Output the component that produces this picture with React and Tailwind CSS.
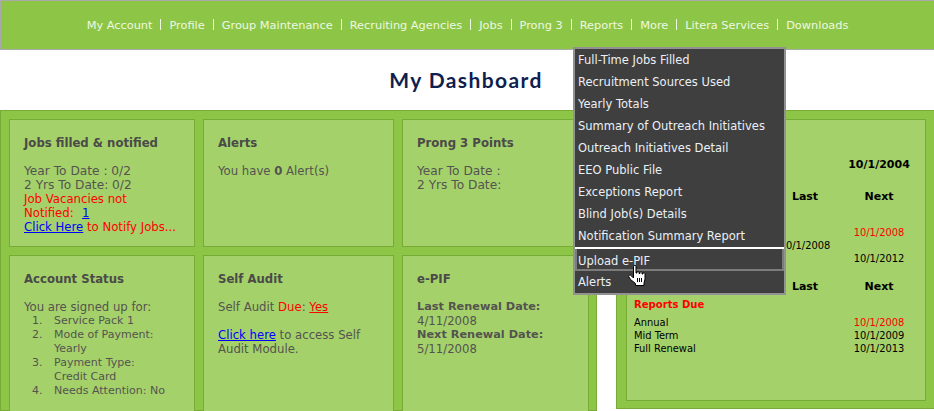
const nav = ["My Account","Profile","Group Maintenance","Recruiting Agencies","Jobs","Prong 3","Reports","More","Litera Services","Downloads"];
const menuTop = ["Full-Time Jobs Filled","Recruitment Sources Used","Yearly Totals","Summary of Outreach Initiatives","Outreach Initiatives Detail","EEO Public File","Exceptions Report","Blind Job(s) Details","Notification Summary Report"];

function Card({ title, className, children }) {
  return (
    <section className={`border border-[#78ab36] bg-[#a5d16b] pl-[14px] pr-2 pt-4 text-[11.7px] leading-[14px] text-[#54544f] ${className}`}>
      <h2 className="mb-[14px] text-[11.7px] font-bold leading-[14px] text-[#4a4a48]">{title}</h2>
      {children}
    </section>
  );
}

function Hand() {
  return (
    <svg className="absolute left-[628px] top-[264px]" width="18" height="23" viewBox="0 0 18 23">
      <path d="M5.5 2.5 C5.5 1 8 1 8 2.5 V9 H9 V8 C9 7 11 7 11 8 V9.5 H12 V8.5 C12 7.5 14 7.5 14 8.5 V10 H15 V9.5 C15 8.5 17 8.5 17 9.5 V15 L16 19 V21.5 H7.5 V19.5 L2.5 15.5 L.7 12.5 C.5 11 2.5 10.5 3.5 12 L5.5 14 Z" fill="#fff" stroke="#000" strokeWidth="1" />
      <path d="M9.5 14v4M11.5 14v4M13.5 14v4" stroke="#000" strokeWidth="1" fill="none" />
    </svg>
  );
}

export default function App() {
  return (
    <div className="relative h-[411px] w-[934px] overflow-hidden bg-white font-['DejaVu_Sans',sans-serif]">
      <nav className="flex h-[50px] items-center justify-center border border-r-0 border-[#aaaaaa] bg-[#8dc646] text-[11.33px] text-[#eef8e0]">
        {nav.map((n, i) => (
          <div key={n} className="flex items-center">
            {i > 0 && <span className="mx-[8px] h-[11px] w-px bg-[#eef8e0]" />}
            <span>{n}</span>
          </div>
        ))}
      </nav>

      <h1 className="flex h-[60px] items-center justify-center pr-[2px] font-['Lato',sans-serif] text-[21px] font-bold tracking-[1.4px] text-[#0f1f4f]">My Dashboard</h1>

      <main className="flex items-start">
        <div className="grid h-[301px] w-[597px] grid-cols-[186px_191px_187px] grid-rows-[128px_150px] gap-x-2 gap-y-2 border border-[#78ab36] bg-[#8dc646] pl-2 pt-2">
          <Card title="Jobs filled & notified">
            <p className="text-[12.2px]">Year To Date : 0/2</p>
            <p className="text-[12.2px]">2 Yrs To Date: 0/2</p>
            <p className="text-[#ff0000]">Job Vacancies not</p>
            <p className="text-[#ff0000]">Notified:&nbsp; <a className="ml-px text-[#0000ff] underline">1</a></p>
            <p className="text-[#ff0000]"><a className="text-[#0000ff] underline">Click Here</a> to Notify Jobs...</p>
          </Card>
          <Card title="Alerts">
            <p>You have <b>0</b> Alert(s)</p>
          </Card>
          <Card title="Prong 3 Points">
            <p className="text-[12.2px]">Year To Date :</p>
            <p className="text-[12.2px]">2 Yrs To Date:</p>
          </Card>
          <Card title="Account Status" className="h-[170px]">
            <p>You are signed up for:</p>
            <ol className="text-[11px]">
              {[["1.",["Service Pack 1"]],["2.",["Mode of Payment:","Yearly"]],["3.",["Payment Type:","Credit Card"]],["4.",["Needs Attention: No"]]].map(([k, lines]) => (
                <li key={k} className="flex">
                  <span className="w-[30px] pl-2">{k}</span>
                  <span>{lines.map((l) => <span key={l} className="block">{l}</span>)}</span>
                </li>
              ))}
            </ol>
          </Card>
          <Card title="Self Audit" className="h-[170px]">
            <p>Self Audit <span className="text-[#ff0000]">Due</span>: <a className="text-[#ff0000] underline">Yes</a></p>
            <p className="mt-[14px] pr-[2px]"><a className="text-[#0000ff] underline">Click here</a> to access Self Audit Module.</p>
          </Card>
          <Card title="e-PIF" className="h-[170px]">
            <p className="text-[11.3px] font-bold">Last Renewal Date:</p>
            <p>4/11/2008</p>
            <p className="text-[11.3px] font-bold">Next Renewal Date:</p>
            <p>5/11/2008</p>
          </Card>
        </div>

        <aside className="ml-[19px] h-[299px] w-[318px] border border-r-0 border-[#78ab36] bg-[#8dc646] pl-[9px] pt-2">
          <div className="h-[282px] w-[300px] border border-[#78ab36] bg-[#a5d16b] text-black">
            <div className="grid grid-cols-[141px_74px_74px] text-center text-[11px] leading-[14px]">
              <div className="col-start-3 mt-[38px] font-bold">10/1/2004</div>
              <div className="col-start-2 mt-[18px] font-bold">Last</div>
              <div className="mt-[18px] font-bold">Next</div>
            </div>
            <div className="mt-[22px] grid grid-cols-[141px_74px_74px] items-center text-center font-['DejaVu_Sans_Condensed','DejaVu_Sans',sans-serif] text-[11px] leading-[13px]">
              <div className="col-start-2">10/1/2008</div>
              <div className="flex flex-col gap-[13px]">
                <span className="text-[#ff0000]">10/1/2008</span>
                <span>10/1/2012</span>
              </div>
            </div>
            <div className="mt-[15px] grid grid-cols-[141px_74px_74px] text-center text-[11px] font-bold leading-[14px]">
              <div className="col-start-2">Last</div>
              <div>Next</div>
            </div>
            <div className="mt-[4px] pl-[7px] font-['DejaVu_Sans_Condensed','DejaVu_Sans',sans-serif] text-[11.2px] font-bold leading-[14px] text-[#ff0000]">Reports Due</div>
            <div className="mt-[4px] grid grid-cols-[215px_74px] font-['DejaVu_Sans_Condensed','DejaVu_Sans',sans-serif] text-[11px] leading-[13px]">
              {[["Annual","10/1/2008",true],["Mid Term","10/1/2009"],["Full Renewal","10/1/2013"]].map(([a, b, red]) => (
                <div key={a} className="contents">
                  <span className="pl-[7px]">{a}</span>
                  <span className={`text-center ${red ? "text-[#ff0000]" : ""}`}>{b}</span>
                </div>
              ))}
            </div>
          </div>
        </aside>
      </main>

      <div className="absolute left-[573px] top-[47px] w-[213px] border-2 border-[#929292] bg-[#3f3f3f] text-[11.5px] text-[#eaf0f6]">
        {menuTop.map((m) => <div key={m} className="flex h-[22px] items-center pl-[3px] pt-[2px]">{m}</div>)}
        <div className="h-[2px] bg-white" />
        <div className="flex h-[22px] items-center border-2 border-t-0 border-[#7c7c7c] pl-[1px] pt-[5px]">Upload e-PIF</div>
        <div className="flex h-[22px] items-center pl-[3px] pt-[2px]">Alerts</div>
      </div>
      <Hand />
    </div>
  );
}
